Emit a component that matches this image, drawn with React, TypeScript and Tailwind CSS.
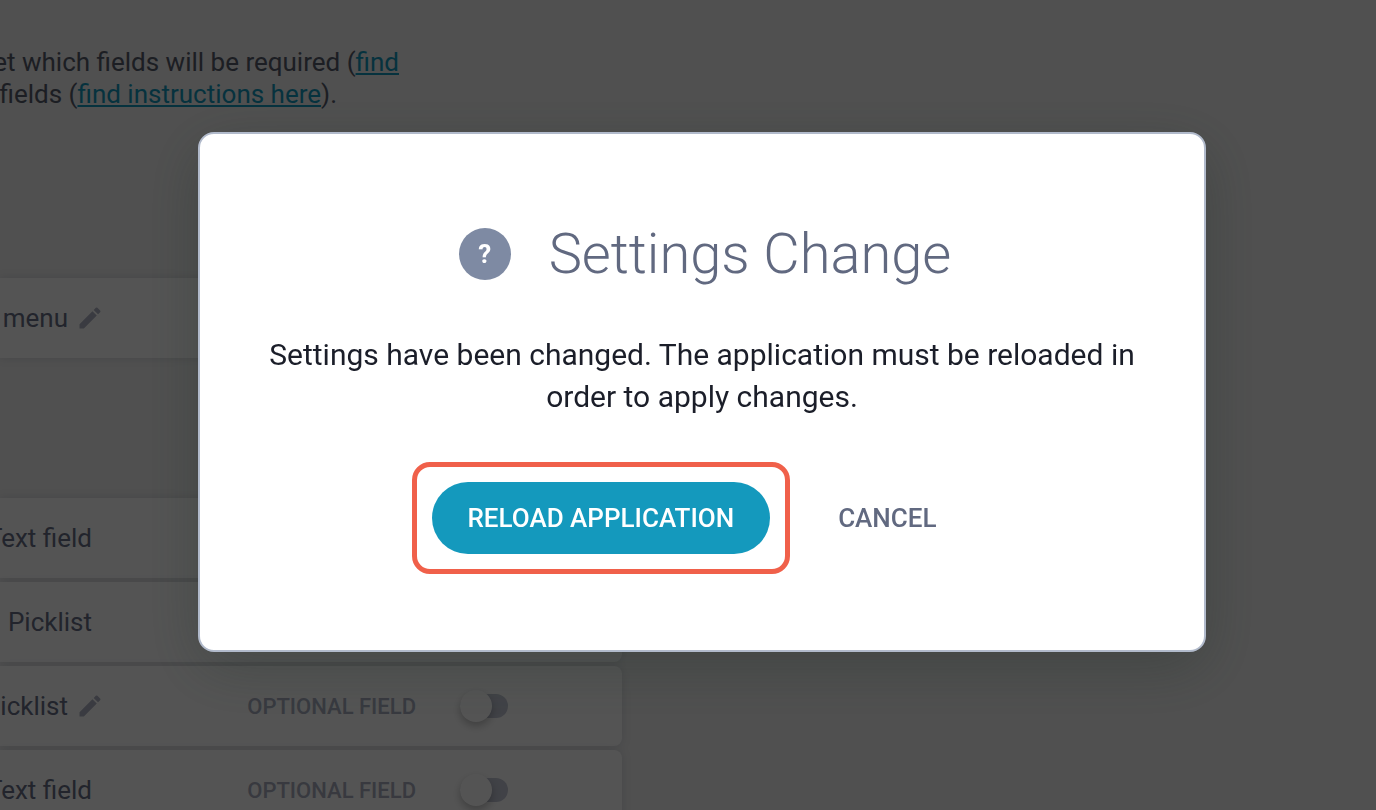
import React, { useState } from 'react';
import { MdEdit } from 'react-icons/md';

interface FieldRowProps {
    name: string;
    editable?: boolean;
}

const FieldRow: React.FC<FieldRowProps> = ({ name, editable }) => {
    const [required, setRequired] = useState(false);

    return (
        <li className="flex items-center h-20 pr-[114px] bg-white rounded-r-lg shadow-[0_0_10px_rgba(97,105,128,0.2)]">
            <div className={`flex flex-none w-26 items-center justify-end gap-2 whitespace-nowrap text-[26px] text-[#676f86] ${editable ? '' : 'pr-3'}`}>
                <span>{name}</span>
                {editable && (
                    <button aria-label={`Edit ${name}`} className="text-[#b0b4c4]">
                        <MdEdit size={28} />
                    </button>
                )}
            </div>
            <label className="flex flex-1 items-center justify-end gap-11 text-[22px] font-medium text-[#a9aec0]">
                <span>OPTIONAL FIELD</span>
                <span className="relative flex items-center">
                    <input
                        type="checkbox"
                        checked={required}
                        onChange={() => setRequired(!required)}
                        className="peer appearance-none w-12 h-6 rounded-full bg-[#c4c8d6]"
                    />
                    <span className="absolute left-0 w-8 h-8 rounded-full bg-white shadow-[0_4px_8px_rgba(0,0,0,0.25)] peer-checked:left-4" />
                </span>
            </label>
        </li>
    );
};

const SettingsPage: React.FC = () => (
    <main className="h-full overflow-hidden pt-[46px] bg-[#f1f1f1]">
        <div className="flex flex-col items-end w-[399px] whitespace-nowrap text-[26px] leading-8 text-[#565b6b]">
            <p>
                Set which fields will be required (<a href="#required" className="underline text-[#1499bd]">find</a>
            </p>
            <p className="mr-[62px]">
                fields (<a href="#instructions" className="underline text-[#1499bd]">find instructions here</a>).
            </p>
        </div>
        <ul className="w-[622px] mt-42">
            <FieldRow name="menu" editable />
        </ul>
        <ul className="flex flex-col gap-1 w-[622px] mt-35">
            <FieldRow name="Text field" />
            <FieldRow name="Picklist" />
            <FieldRow name="Picklist" editable />
            <FieldRow name="Text field" />
        </ul>
    </main>
);

const SettingsDialog: React.FC = () => (
    <div className="fixed inset-0 flex items-center justify-center pl-7 pb-[26px] bg-black/67">
        <section
            role="dialog"
            aria-labelledby="dialog-title"
            className="w-full max-w-[1008px] px-16 pt-[84px] pb-24 bg-white border-2 border-[#b1bacb] rounded-2xl text-center shadow-[0_16px_60px_rgba(30,44,36,0.28)]"
        >
            <div className="flex items-center justify-center gap-[38px] pl-1.5">
                <span className="flex items-center justify-center w-13 h-13 rounded-full bg-[#7e8aa3] text-[26px] font-bold text-white">?</span>
                <h1 id="dialog-title" className="text-[56px] leading-[72px] font-light text-[#616980]">Settings Change</h1>
            </div>
            <p className="mt-11 text-[30px] leading-[42px] text-[#1b1e29]">
                Settings have been changed. The application must be reloaded in order to apply changes.
            </p>
            <div className="flex justify-center gap-8 mt-16 text-[26px] font-medium">
                <div className="relative">
                    <button className="h-18 px-9 rounded-full bg-[#1499bd] text-white">RELOAD APPLICATION</button>
                    <span className="absolute -inset-5 border-5 border-[#f0604a] rounded-[18px] pointer-events-none" />
                </div>
                <button className="h-18 px-9 rounded-full text-[#616980]">CANCEL</button>
            </div>
        </section>
    </div>
);

export default function App() {
    return (
        <div className="h-screen font-[Roboto,sans-serif]">
            <SettingsPage />
            <SettingsDialog />
        </div>
    );
}
